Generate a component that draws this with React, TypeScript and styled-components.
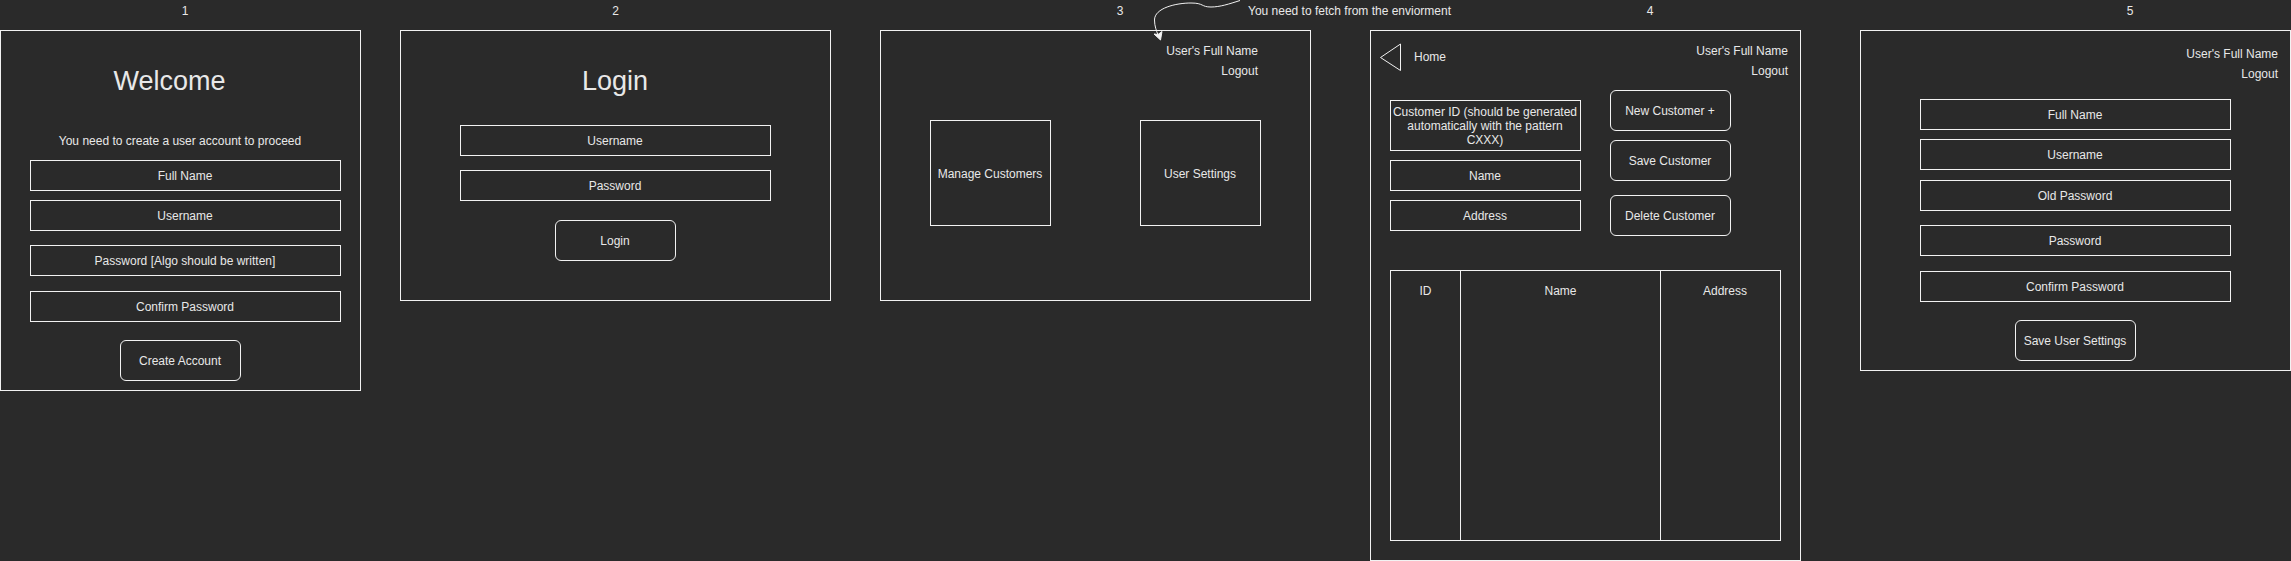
import React from "react";
import styled, { createGlobalStyle } from "styled-components";

const line = "#f2f2f2";
const surface = "#2a2a2a";

const GlobalStyle = createGlobalStyle`
  *, *::before, *::after { box-sizing: border-box; }
  body {
    margin: 0;
    background: ${surface};
    color: #e8e8e8;
    font-family: "Liberation Sans", Arial, Helvetica, sans-serif;
    font-size: 12px;
    line-height: 14px;
  }
`;

const Board = styled.main`
  display: flex;
  align-items: flex-start;
`;

const Screen = styled.section<{ $grow?: number; $space?: number }>`
  position: relative;
  flex: ${(p) => p.$grow ?? 431} 1 0;
  margin-left: ${(p) => p.$space ?? 0}px;
  min-width: 0;
`;

const ScreenNumber = styled.header<{ $shift?: number }>`
  height: 30px;
  padding-top: 4px;
  padding-left: ${(p) => p.$shift ?? 0}px;
  text-align: center;
`;

const Panel = styled.div<{ $bottom: number }>`
  display: flex;
  flex-direction: column;
  border: 1px solid ${line};
  padding-bottom: ${(p) => p.$bottom}px;
`;

const Title = styled.h1<{ $shift?: number }>`
  margin: 34px 0 0;
  padding-right: ${(p) => p.$shift ?? 0}px;
  font-size: 27px;
  line-height: 32px;
  font-weight: 400;
  text-align: center;
`;

const Hint = styled.p`
  margin: 37px 0 0;
  padding-right: 1px;
  text-align: center;
`;

const Form = styled.form<{ $top: number; $left?: number; $right?: number }>`
  display: flex;
  flex-direction: column;
  padding: ${(p) => p.$top}px ${(p) => p.$right ?? 59}px 0 ${(p) => p.$left ?? 59}px;
`;

const Field = styled.input<{ $gap?: number }>`
  display: block;
  width: 100%;
  height: 31px;
  margin: ${(p) => p.$gap ?? 0}px 0 0;
  padding: 0 5px 0 4px;
  border: 1px solid ${line};
  border-radius: 0;
  background: transparent;
  color: inherit;
  font: inherit;
  text-align: center;
  &::placeholder { color: inherit; opacity: 1; }
`;

const LongField = styled.textarea`
  display: block;
  width: 100%;
  height: 51px;
  margin: 0;
  padding: 4px 2px 3px 1px;
  border: 1px solid ${line};
  border-radius: 0;
  background: transparent;
  color: inherit;
  font: inherit;
  text-align: center;
  resize: none;
  overflow: hidden;
  &::placeholder { color: inherit; opacity: 1; }
`;

const Button = styled.button<{ $gap?: number }>`
  width: 121px;
  height: 41px;
  margin: ${(p) => p.$gap ?? 0}px 0 0;
  padding: 0 1px 0 0;
  border: 1px solid ${line};
  border-radius: 6px;
  background: transparent;
  color: inherit;
  font: inherit;
  white-space: nowrap;
`;

const SubmitRow = styled.div<{ $gap: number }>`
  display: flex;
  justify-content: center;
  margin-top: ${(p) => p.$gap}px;
`;

const Account = styled.div<{ $top?: number; $right?: number }>`
  display: flex;
  flex-direction: column;
  align-items: flex-end;
  gap: 6px;
  margin-left: auto;
  padding: ${(p) => p.$top ?? 13}px ${(p) => p.$right ?? 12}px 0 0;
`;

const TextLink = styled.a`
  color: inherit;
  text-decoration: none;
`;

const Tiles = styled.nav`
  display: flex;
  justify-content: space-between;
  padding: 42px 49px 0;
`;

const Tile = styled.button`
  width: 121px;
  height: 106px;
  padding: 2px 1px 0 0;
  border: 1px solid ${line};
  background: transparent;
  color: inherit;
  font: inherit;
`;

const TopBar = styled.div`
  display: flex;
  align-items: flex-start;
`;

const HomeLink = styled(TextLink)`
  display: flex;
  align-items: center;
  gap: 11px;
  padding: 12px 0 0 8px;
`;

const Editor = styled.form`
  display: flex;
  gap: 29px;
  padding: 12px 69px 0 19px;
`;

const EditorFields = styled.div`
  flex: 1;
  min-width: 0;
  padding-top: 10px;
`;

const EditorActions = styled.div`
  display: flex;
  flex-direction: column;
`;

const TableArea = styled.div`
  padding: 34px 19px 0;
`;

const CustomerTable = styled.table`
  width: 100%;
  height: 271px;
  table-layout: fixed;
  border-collapse: separate;
  border-spacing: 0;
  border: 1px solid ${line};
`;

const HeadCell = styled.th<{ $width?: string; $indent?: number }>`
  width: ${(p) => p.$width ?? "auto"};
  padding: 13px 0 0 ${(p) => p.$indent ?? 0}px;
  font-weight: 400;
  text-align: center;
  vertical-align: top;
  & + & { border-left: 1px solid ${line}; }
`;

const Note = styled.aside`
  position: absolute;
  top: 0;
  left: calc(100% - 161px);
  display: flex;
  gap: 5px;
  white-space: nowrap;
  pointer-events: none;
`;

const NoteText = styled.span`
  padding-top: 4px;
`;

const NoteArrow = () => (
  <svg width="93" height="42" viewBox="0 0 93 42" fill="none" aria-hidden="true">
    <path
      d="M90 0.5C79 4 70 7 61 7C51 7 54 3 41 3C26 3 4.500 8 4.500 20C4.500 26 6.500 31 8 35"
      stroke={line}
    />
    <path d="M10.500 40L4 34L8 34.500L12 31.500Z" fill={line} stroke={line} strokeLinejoin="miter" />
  </svg>
);

const BackTriangle = () => (
  <svg width="24" height="28" viewBox="0 0 24 28" fill="none" aria-hidden="true">
    <path d="M21.500 1L1.500 14.500L21.500 27.500Z" stroke={line} />
  </svg>
);

type FieldSpec = { label: string; gap?: number; type?: string };

const Fields = ({ items }: { items: FieldSpec[] }) => (
  <>
    {items.map(({ label, gap, type }) => (
      <Field key={label} aria-label={label} placeholder={label} type={type ?? "text"} $gap={gap} />
    ))}
  </>
);

const AccountLinks = ({ top, right }: { top?: number; right?: number }) => (
  <Account $top={top} $right={right}>
    <span>User's Full Name</span>
    <TextLink href="#logout">Logout</TextLink>
  </Account>
);

export default function App() {
  return (
    <>
      <GlobalStyle />
      <Board>
        <Screen $grow={361}>
          <ScreenNumber $shift={9}>1</ScreenNumber>
          <Panel $bottom={9}>
            <Title $shift={22}>Welcome</Title>
            <Hint>You need to create a user account to proceed</Hint>
            <Form $top={12} $left={29} $right={19}>
              <Fields
                items={[
                  { label: "Full Name" },
                  { label: "Username", gap: 9 },
                  { label: "Password [Algo should be written]", gap: 14, type: "password" },
                  { label: "Confirm Password", gap: 15, type: "password" },
                ]}
              />
            </Form>
            <SubmitRow $gap={18}>
              <Button type="button">Create Account</Button>
            </SubmitRow>
          </Panel>
        </Screen>

        <Screen $space={39}>
          <ScreenNumber>2</ScreenNumber>
          <Panel $bottom={39}>
            <Title $shift={1}>Login</Title>
            <Form $top={28}>
              <Fields items={[{ label: "Username" }, { label: "Password", gap: 14, type: "password" }]} />
            </Form>
            <SubmitRow $gap={19}>
              <Button type="button">Login</Button>
            </SubmitRow>
          </Panel>
        </Screen>

        <Screen $space={49}>
          <ScreenNumber $shift={49}>3</ScreenNumber>
          <Panel $bottom={74}>
            <AccountLinks right={52} />
            <Tiles>
              <Tile type="button">Manage Customers</Tile>
              <Tile type="button">User Settings</Tile>
            </Tiles>
          </Panel>
          <Note>
            <NoteArrow />
            <NoteText>You need to fetch from the enviorment</NoteText>
          </Note>
        </Screen>

        <Screen $space={59}>
          <ScreenNumber $shift={129}>4</ScreenNumber>
          <Panel $bottom={19}>
            <TopBar>
              <HomeLink href="#home">
                <BackTriangle />
                Home
              </HomeLink>
              <AccountLinks />
            </TopBar>
            <Editor>
              <EditorFields>
                <LongField
                  aria-label="Customer ID"
                  placeholder="Customer ID (should be generated automatically with the pattern CXXX)"
                />
                <Fields items={[{ label: "Name", gap: 9 }, { label: "Address", gap: 9 }]} />
              </EditorFields>
              <EditorActions>
                <Button type="button">New Customer +</Button>
                <Button type="button" $gap={9}>Save Customer</Button>
                <Button type="button" $gap={14}>Delete Customer</Button>
              </EditorActions>
            </Editor>
            <TableArea>
              <CustomerTable>
                <thead>
                  <tr>
                    <HeadCell scope="col" $width="69px">ID</HeadCell>
                    <HeadCell scope="col">Name</HeadCell>
                    <HeadCell scope="col" $width="120px" $indent={9}>Address</HeadCell>
                  </tr>
                </thead>
              </CustomerTable>
            </TableArea>
          </Panel>
        </Screen>

        <Screen $space={59}>
          <ScreenNumber $shift={109}>5</ScreenNumber>
          <Panel $bottom={9}>
            <AccountLinks top={16} />
            <Form $top={18}>
              <Fields
                items={[
                  { label: "Full Name" },
                  { label: "Username", gap: 9 },
                  { label: "Old Password", gap: 10, type: "password" },
                  { label: "Password", gap: 14, type: "password" },
                  { label: "Confirm Password", gap: 15, type: "password" },
                ]}
              />
            </Form>
            <SubmitRow $gap={18}>
              <Button type="button">Save User Settings</Button>
            </SubmitRow>
          </Panel>
        </Screen>
      </Board>
    </>
  );
}
